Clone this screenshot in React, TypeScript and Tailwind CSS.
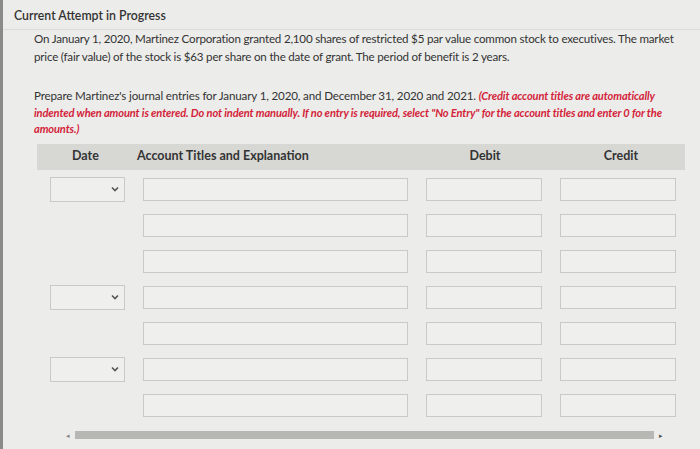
import React from "react";

const rows = [true, false, false, true, false, true, false];

const Box = ({ className }: { className: string }) => (
  <div className={`h-[23px] shrink-0 border-[1.5px] border-[#c9c9c6] bg-[#efefed] ${className}`}></div>
);

const App = () => {
  return (
    <div className="w-[700px] h-[449px] overflow-hidden bg-[#ececea] border-l-[3px] border-[#8a8a88] font-['Lato',sans-serif] text-[#2b2b2b]">
      <div className="pl-[11px] pt-[8px] h-[30px] border-b border-[#dcdcda] text-[12.3px] leading-[16px] font-semibold text-[#333]">
        Current Attempt in Progress
      </div>
      <div className="pl-[31px] whitespace-nowrap text-[#333]">
        <p className="text-[11.6px] leading-[18px] tracking-[-0.2px]">
          On January 1, 2020, Martinez Corporation granted 2,100 shares of restricted $5 par value common stock to executives. The market
          <br />
          price (fair value) of the stock is $63 per share on the date of grant. The period of benefit is 2 years.
        </p>
        <p className="mt-[22px] text-[11.6px] leading-[16.5px] tracking-[-0.15px]">
          Prepare Martinez's journal entries for January 1, 2020, and December 31, 2020 and 2021.{" "}
          <span className="italic font-bold text-[#d41f3a] text-[11.1px] tracking-[-0.13px]">(Credit account titles are automatically</span>
          <br />
          <span className="italic font-bold text-[#d41f3a] text-[11.1px] tracking-[-0.13px]">
            indented when amount is entered. Do not indent manually. If no entry is required, select "No Entry" for the account titles and enter 0 for the
          </span>
          <br />
          <span className="italic font-bold text-[#d41f3a] text-[11.1px] tracking-[-0.13px]">amounts.)</span>
        </p>
      </div>

      <div className="ml-[34px] mr-[15px] mt-[6px] h-[26px] bg-[#d7d7d4] flex items-center text-[12.5px] font-bold text-[#333]">
        <div className="w-[100px] shrink-0 pl-[35px]">Date</div>
        <div className="w-[300px] shrink-0">Account Titles and Explanation</div>
        <div className="w-[96px] shrink-0 text-center">Debit</div>
        <div className="w-[176px] shrink-0 text-center">Credit</div>
      </div>

      <div className="ml-[47px] mt-[8px] flex flex-col gap-[13px]">
        {rows.map((hasDate, i) => (
          <div key={i} className="h-[23px] flex items-center gap-[18px]">
            {hasDate ? (
              <div className="w-[75px] h-[25px] shrink-0 border-[1.5px] border-[#c9c9c6] bg-[#efefed] flex items-center justify-end pr-[5px]">
                <svg width="8" height="6" viewBox="0 0 8 6">
                  <path d="M1 1.5 L4 4.5 L7 1.5" stroke="#555" strokeWidth="1.6" fill="none" />
                </svg>
              </div>
            ) : (
              <div className="w-[75px] shrink-0"></div>
            )}
            <Box className="w-[265px]" />
            <Box className="w-[116px]" />
            <Box className="w-[116px]" />
          </div>
        ))}
      </div>

      <div className="mt-[14px] ml-[63px] flex items-center gap-[5px]">
        <span className="text-[7px] leading-[8px] text-[#888]">◂</span>
        <div className="w-[579px] h-[8px] bg-[#b7b7b4]"></div>
        <span className="text-[7px] leading-[8px] text-[#555]">▸</span>
      </div>
    </div>
  );
};

export default App;
